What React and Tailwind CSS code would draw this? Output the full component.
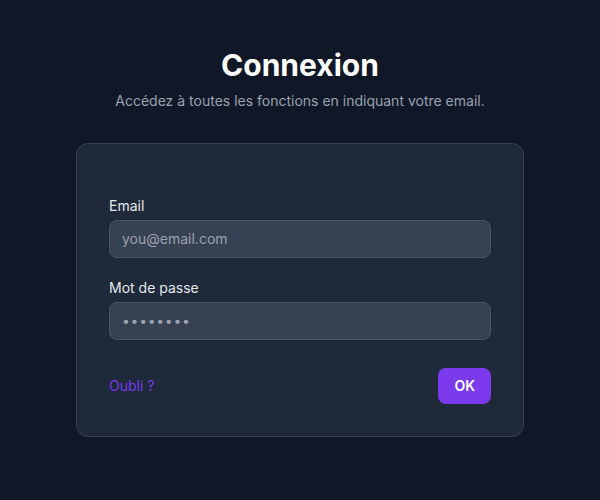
export default function App() {
  return (
    <div
      className="min-h-screen bg-gray-900 pt-[47px] px-4"
      style={{ fontFamily: 'Inter, "Noto Sans", sans-serif' }}
    >
      <div className="mx-auto max-w-md">
        <h1 className="text-center text-3xl font-bold text-white">Connexion</h1>
        <p className="mt-2 text-center text-sm text-gray-400">
          Accédez à toutes les fonctions en indiquant votre email.
        </p>

        <form
          className="mt-8 rounded-xl border border-gray-700 bg-gray-800 p-8 pt-[52px]"
          onSubmit={(e) => e.preventDefault()}
        >
          <div className="space-y-5">
            <div>
              <label className="block text-sm text-gray-200">Email</label>
              <input
                type="email"
                placeholder="you@email.com"
                className="mt-1 block w-full rounded-lg border border-gray-600 bg-gray-700 px-3 py-2 text-sm text-white placeholder-gray-400 outline-none"
              />
            </div>
            <div>
              <label className="block text-sm text-gray-200">Mot de passe</label>
              <input
                type="password"
                defaultValue="password"
                className="mt-1 block w-full rounded-lg border border-gray-600 bg-gray-700 px-3 py-2 text-sm tracking-wider text-gray-400 outline-none"
              />
            </div>
          </div>

          <div className="mt-7 flex items-center justify-between">
            <a href="#" className="text-sm text-[#7c3aed]">
              Oubli ?
            </a>
            <button
              type="submit"
              className="rounded-lg bg-[#7c3aed] px-4 py-2 text-sm font-semibold text-white"
            >
              OK
            </button>
          </div>
        </form>
      </div>
    </div>
  );
}
